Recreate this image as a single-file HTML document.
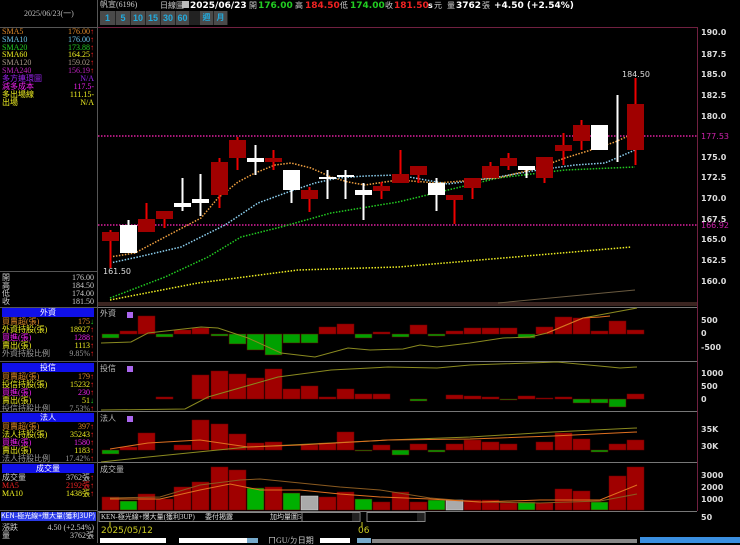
<!DOCTYPE html>
<html><head><meta charset="utf-8">
<style>
body{margin:0;width:740px;height:543px;background:#000;overflow:hidden;position:relative;font-family:"Liberation Sans","Noto Sans CJK TC",sans-serif;}
.t{position:absolute;font-size:8px;line-height:8px;white-space:nowrap;font-family:"Liberation Serif","Noto Sans CJK TC",serif;}
.r{text-align:right;}
.hd{position:absolute;left:2px;width:92px;height:9px;background:#1010e8;color:#fff;font-size:8px;line-height:9px;text-align:center;font-family:"Noto Sans CJK TC",sans-serif;}
.btn{position:absolute;top:11px;height:14px;background:#4a4a4a;color:#2ad;font-size:9px;line-height:14px;text-align:center;font-weight:bold;border-right:1px solid #222;}
.ax{position:absolute;left:701px;font-size:8px;color:#ddd;font-weight:bold;font-family:"DejaVu Sans",sans-serif;}
.tb{position:absolute;top:1px;font-size:9px;line-height:10px;font-weight:bold;white-space:nowrap;font-family:"DejaVu Sans",sans-serif;}
.tl{position:absolute;top:1px;font-size:8px;line-height:9px;color:#ccc;white-space:nowrap;font-family:"Noto Sans CJK TC",sans-serif;}
</style></head><body>
<!-- left panel -->
<div style="position:absolute;left:0;top:0;width:97px;height:543px;border-right:1px solid #555;"></div>
<div style="position:absolute;left:0;top:27px;width:97px;height:1px;background:#555"></div>
<div class="t" style="left:24px;top:10px;color:#bbb">2025/06/23(一)</div>
<div class="t" style="left:2px;top:28px;color:#e08a2a">SMA5</div><div class="t r" style="right:646px;top:28px;color:#e08a2a">176.00<span style="color:#f22">↑</span></div>
<div class="t" style="left:2px;top:36px;color:#6bc4e8">SMA10</div><div class="t r" style="right:646px;top:36px;color:#6bc4e8">176.00<span style="color:#f22">↑</span></div>
<div class="t" style="left:2px;top:44px;color:#2c2">SMA20</div><div class="t r" style="right:646px;top:44px;color:#2c2">173.88<span style="color:#f22">↑</span></div>
<div class="t" style="left:2px;top:51px;color:#ee2">SMA60</div><div class="t r" style="right:646px;top:51px;color:#ee2">164.25<span style="color:#f22">↑</span></div>
<div class="t" style="left:2px;top:59px;color:#a98">SMA120</div><div class="t r" style="right:646px;top:59px;color:#a98">159.02<span style="color:#f22">↑</span></div>
<div class="t" style="left:2px;top:67px;color:#b2b">SMA240</div><div class="t r" style="right:646px;top:67px;color:#b2b">156.19<span style="color:#f22">↑</span></div>
<div class="t" style="left:2px;top:75px;color:#92e">多方連環圖</div><div class="t r" style="right:646px;top:75px;color:#92e">N/A</div>
<div class="t" style="left:2px;top:83px;color:#e2e">減多成本</div><div class="t r" style="right:646px;top:83px;color:#e2e">117.5-</div>
<div class="t" style="left:2px;top:91px;color:#ee2">多出場線</div><div class="t r" style="right:646px;top:91px;color:#ee2">111.15-</div>
<div class="t" style="left:2px;top:99px;color:#ee2">出場</div><div class="t r" style="right:646px;top:99px;color:#ee2">N/A</div>
<div style="position:absolute;left:0;top:271px;width:97px;height:1px;background:#555"></div>
<div class="t" style="left:2px;top:274px;color:#ccc">開</div><div class="t r" style="right:646px;top:274px;color:#ccc">176.00</div>
<div class="t" style="left:2px;top:282px;color:#ccc">高</div><div class="t r" style="right:646px;top:282px;color:#ccc">184.50</div>
<div class="t" style="left:2px;top:290px;color:#ccc">低</div><div class="t r" style="right:646px;top:290px;color:#ccc">174.00</div>
<div class="t" style="left:2px;top:298px;color:#ccc">收</div><div class="t r" style="right:646px;top:298px;color:#ccc">181.50</div>
<div style="position:absolute;left:0;top:307px;width:97px;height:1px;background:#555"></div>
<div class="hd" style="top:308px">外資</div>
<div class="t" style="left:2px;top:318px;color:#e08a2a">買賣超(張)</div><div class="t r" style="right:646px;top:318px;color:#e08a2a">175<span style="color:#2c2">↓</span></div>
<div class="t" style="left:2px;top:326px;color:#ee2">外資持股(張)</div><div class="t r" style="right:646px;top:326px;color:#ee2">18927<span style="color:#f22">↑</span></div>
<div class="t" style="left:2px;top:334px;color:#e2e">買進(張)</div><div class="t r" style="right:646px;top:334px;color:#e2e">1288<span style="color:#f22">↑</span></div>
<div class="t" style="left:2px;top:342px;color:#ee2">賣出(張)</div><div class="t r" style="right:646px;top:342px;color:#ee2">1113<span style="color:#f22">↑</span></div>
<div class="t" style="left:2px;top:350px;color:#999">外資持股比例</div><div class="t r" style="right:646px;top:350px;color:#999">9.85%<span style="color:#f22">↑</span></div>
<div style="position:absolute;left:0;top:361px;width:97px;height:1px;background:#555"></div>
<div class="hd" style="top:363px">投信</div>
<div class="t" style="left:2px;top:373px;color:#e08a2a">買賣超(張)</div><div class="t r" style="right:646px;top:373px;color:#e08a2a">179<span style="color:#f22">↑</span></div>
<div class="t" style="left:2px;top:381px;color:#ee2">投信持股(張)</div><div class="t r" style="right:646px;top:381px;color:#ee2">15232<span style="color:#f22">↑</span></div>
<div class="t" style="left:2px;top:389px;color:#e2e">買進(張)</div><div class="t r" style="right:646px;top:389px;color:#e2e">230<span style="color:#f22">↑</span></div>
<div class="t" style="left:2px;top:397px;color:#ee2">賣出(張)</div><div class="t r" style="right:646px;top:397px;color:#ee2">51<span style="color:#2c2">↓</span></div>
<div class="t" style="left:2px;top:405px;color:#999">投信持股比例</div><div class="t r" style="right:646px;top:405px;color:#999">7.53%<span style="color:#f22">↑</span></div>
<div style="position:absolute;left:0;top:411px;width:97px;height:1px;background:#555"></div>
<div class="hd" style="top:413px">法人</div>
<div class="t" style="left:2px;top:423px;color:#e08a2a">買賣超(張)</div><div class="t r" style="right:646px;top:423px;color:#e08a2a">397<span style="color:#f22">↑</span></div>
<div class="t" style="left:2px;top:431px;color:#ee2">法人持股(張)</div><div class="t r" style="right:646px;top:431px;color:#ee2">35243<span style="color:#f22">↑</span></div>
<div class="t" style="left:2px;top:439px;color:#e2e">買進(張)</div><div class="t r" style="right:646px;top:439px;color:#e2e">1580<span style="color:#f22">↑</span></div>
<div class="t" style="left:2px;top:447px;color:#ee2">賣出(張)</div><div class="t r" style="right:646px;top:447px;color:#ee2">1183<span style="color:#f22">↑</span></div>
<div class="t" style="left:2px;top:455px;color:#999">法人持股比例</div><div class="t r" style="right:646px;top:455px;color:#999">17.42%<span style="color:#f22">↑</span></div>
<div style="position:absolute;left:0;top:462px;width:97px;height:1px;background:#555"></div>
<div class="hd" style="top:464px">成交量</div>
<div class="t" style="left:2px;top:474px;color:#ccc">成交量</div><div class="t r" style="right:646px;top:474px;color:#ccc">3762張<span style="color:#f22">↑</span></div>
<div class="t" style="left:2px;top:482px;color:#e22">MA5</div><div class="t r" style="right:646px;top:482px;color:#e22">2192張<span style="color:#f22">↑</span></div>
<div class="t" style="left:2px;top:490px;color:#ee2">MA10</div><div class="t r" style="right:646px;top:490px;color:#ee2">1438張<span style="color:#f22">↑</span></div>
<div style="position:absolute;left:0;top:510px;width:97px;height:1px;background:#555"></div>
<div style="position:absolute;left:1px;top:512px;width:95px;height:9px;background:#2a3ae8;color:#fff;font-size:7px;line-height:9px;font-family:'Noto Sans CJK TC',sans-serif;white-space:nowrap;overflow:hidden">KEN-極光線+爆大量(獲利3UP)</div>
<div class="t" style="left:2px;top:524px;color:#ccc">漲跌</div><div class="t r" style="right:646px;top:524px;color:#ccc">4.50 (+2.54%)</div>
<div class="t" style="left:2px;top:532px;color:#ccc">量</div><div class="t r" style="right:646px;top:532px;color:#ccc">3762張</div>

<!-- top bar -->
<div class="t" style="left:100px;top:1px;color:#ccc;font-size:8px">帆宣(6196)</div>
<div class="tl" style="left:160px">日線圖</div>
<div style="position:absolute;left:182px;top:1px;width:7px;height:7px;background:#bbb"></div>
<div class="tb" style="left:190px;color:#fff">2025/06/23</div>
<div class="tl" style="left:249px">開</div><div class="tb" style="left:258px;color:#2c2">176.00</div>
<div class="tl" style="left:295px">高</div><div class="tb" style="left:305px;color:#e22">184.50</div>
<div class="tl" style="left:340px">低</div><div class="tb" style="left:350px;color:#2c2">174.00</div>
<div class="tl" style="left:385px">收</div><div class="tb" style="left:394px;color:#e22">181.50</div>
<div class="tb" style="left:428px;color:#fff;font-size:8px">s</div><div class="tl" style="left:434px">元</div>
<div class="tl" style="left:447px">量</div><div class="tb" style="left:456px;color:#fff">3762</div>
<div class="tl" style="left:482px">張</div><div class="tb" style="left:494px;color:#fff">+4.50 (+2.54%)</div>
<div class="btn" style="left:100px;width:15px">1</div>
<div class="btn" style="left:116px;width:14px">5</div>
<div class="btn" style="left:131px;width:14px">10</div>
<div class="btn" style="left:146px;width:14px">15</div>
<div class="btn" style="left:161px;width:14px">30</div>
<div class="btn" style="left:176px;width:13px">60</div>
<div class="btn" style="left:190px;width:9px;background:#222"></div>
<div class="btn" style="left:200px;width:13px;font-size:8px">週</div>
<div class="btn" style="left:214px;width:13px;font-size:8px">月</div>

<!-- axis labels -->
<div class="ax" style="top:28px">190.0</div><div class="ax" style="top:50px">187.5</div><div class="ax" style="top:70px">185.0</div><div class="ax" style="top:91px">182.5</div><div class="ax" style="top:112px">180.0</div><div class="ax" style="top:153px">175.0</div><div class="ax" style="top:173px">172.5</div><div class="ax" style="top:194px">170.0</div><div class="ax" style="top:215px">167.5</div><div class="ax" style="top:235px">165.0</div><div class="ax" style="top:256px">162.5</div><div class="ax" style="top:277px">160.0</div>
<div class="ax" style="top:132px;color:#c2a;font-weight:normal">177.53</div><div class="ax" style="top:221px;color:#c2a;font-weight:normal">166.92</div>
<div class="ax" style="top:316px">500</div><div class="ax" style="top:329px">0</div><div class="ax" style="top:343px">-500</div>
<div class="ax" style="top:369px">1000</div><div class="ax" style="top:382px">500</div><div class="ax" style="top:395px">0</div>
<div class="ax" style="top:425px">35K</div><div class="ax" style="top:442px">30K</div>
<div class="ax" style="top:471px">3000</div><div class="ax" style="top:483px">2000</div><div class="ax" style="top:495px">1000</div>
<div class="ax" style="top:513px">50</div>
<div class="t" style="left:622px;top:71px;color:#ddd;font-family:'DejaVu Sans',sans-serif">184.50</div>
<div class="t" style="left:103px;top:268px;color:#ddd;font-family:'DejaVu Sans',sans-serif">161.50</div>
<div class="t" style="left:100px;top:310px;color:#bbb">外資</div>
<div class="t" style="left:100px;top:365px;color:#bbb">投信</div>
<div class="t" style="left:100px;top:415px;color:#bbb">法人</div>
<div class="t" style="left:100px;top:466px;color:#bbb">成交量</div>

<svg width="740" height="543" style="position:absolute;left:0;top:0">
<g fill="none">
<path d="M98 27.5H697.5V511" stroke="#702040"/>
<path d="M98 307.5H697M98 361.5H697M98 411.5H697M98 462.5H697M98 511.5H697" stroke="#777"/>
<rect x="98" y="302" width="599" height="4" fill="#3a2420"/>
<rect x="127" y="312" width="6" height="6" fill="#a6e"/><rect x="127" y="366" width="6" height="6" fill="#a6e"/><rect x="127" y="416" width="6" height="6" fill="#a6e"/>
<path d="M98 136H697M98 225H697" stroke="#e020a0" stroke-width="1.5" stroke-dasharray="1.5 1.5"/>
<polyline points="498,303 635,290" stroke="#6a5a40"/>
<polyline points="110,300 198,283 298,270 398,267 631,247" stroke="#ee2" stroke-width="1.5" stroke-dasharray="1.5 1.5"/>
<polyline points="110,298 165,277 208,257 241,237 281,227 331,213 398,202 498,178 565,170 635,167" stroke="#2c2" stroke-width="1.5" stroke-dasharray="1.5 1.5"/>
<polyline points="110,263 138,257 181,247 225,225 258,203 291,191 315,183 338,178 365,176 398,175 448,184 498,177 538,170 575,165 605,163 635,150" stroke="#8cd0f0" stroke-width="1.5" stroke-dasharray="1.5 1.5"/>
<polyline points="110,257 135,253 165,237 201,218 218,198 238,182 255,173 275,165 291,163 311,168 331,177 348,182 365,185 398,180 438,183 498,178 538,168 565,158 591,150 615,142 635,133" stroke="#f0a040" stroke-width="1.5" stroke-dasharray="1.5 1.5"/>
</g>
<g stroke-width="2">
<path stroke="#e00" d="M110.5 230V268M146.5 203V232M164.5 211V228M219.5 158V208M237.5 137V170M273.5 150V170M309.5 187V212M381.5 182V199M400.5 150V183M418.5 166V183M454.5 195V224M472.5 178V199M490.5 162V178M508.5 153V170M544.5 157V183M563.5 133V165M581.5 120V150M635.5 78V165"/>
<path stroke="#fff" d="M128.5 220V253M182.5 178V211M200.5 174V216M255.5 145V175M291.5 170V203M327.5 170V199M345.5 170V199M363.5 183V220M436.5 178V211M526.5 166V178M617.5 95V162"/>
</g>
<g fill="#a00000">
<rect x="102" y="232" width="17" height="9"/><rect x="138" y="219" width="17" height="13"/><rect x="156" y="211" width="17" height="8"/><rect x="211" y="162" width="17" height="33"/><rect x="229" y="140" width="17" height="18"/><rect x="265" y="158" width="17" height="4"/><rect x="301" y="190" width="17" height="9"/><rect x="373" y="186" width="17" height="5"/><rect x="392" y="174" width="17" height="9"/><rect x="410" y="166" width="17" height="9"/><rect x="446" y="195" width="17" height="5"/><rect x="464" y="178" width="17" height="10"/><rect x="482" y="166" width="17" height="12"/><rect x="500" y="158" width="17" height="8"/><rect x="536" y="157" width="17" height="21"/><rect x="555" y="145" width="17" height="6"/><rect x="573" y="125" width="17" height="16"/><rect x="627" y="104" width="17" height="46"/>
</g>
<g fill="#fff">
<rect x="120" y="225" width="17" height="28"/><rect x="174" y="203" width="17" height="4"/><rect x="192" y="199" width="17" height="4"/><rect x="247" y="158" width="17" height="4"/><rect x="283" y="170" width="17" height="20"/><rect x="319" y="177" width="17" height="2"/><rect x="337" y="175" width="17" height="2"/><rect x="355" y="190" width="17" height="5"/><rect x="428" y="183" width="17" height="12"/><rect x="518" y="166" width="17" height="4"/><rect x="591" y="125" width="17" height="25"/>
</g>
<g stroke="#600" stroke-width="0.5">
<g fill="#a00000">
<rect x="120" y="331" width="17" height="3"/><rect x="138" y="316" width="17" height="18"/><rect x="174" y="330" width="17" height="4"/><rect x="192" y="328" width="17" height="6"/><rect x="319" y="327" width="17" height="7"/><rect x="337" y="324" width="17" height="10"/><rect x="373" y="332" width="17" height="2"/><rect x="410" y="325" width="17" height="9"/><rect x="446" y="331" width="17" height="3"/><rect x="464" y="328" width="17" height="6"/><rect x="482" y="328" width="17" height="6"/><rect x="500" y="328" width="17" height="6"/><rect x="536" y="327" width="17" height="7"/><rect x="555" y="317" width="17" height="17"/><rect x="573" y="318" width="17" height="16"/><rect x="591" y="331" width="17" height="3"/><rect x="609" y="321" width="17" height="13"/><rect x="627" y="330" width="17" height="4"/>
</g>
<g fill="#00a000">
<rect x="102" y="334" width="17" height="4"/><rect x="156" y="334" width="17" height="3"/><rect x="211" y="334" width="17" height="2"/><rect x="229" y="334" width="17" height="10"/><rect x="247" y="334" width="17" height="16"/><rect x="265" y="334" width="17" height="21"/><rect x="283" y="334" width="17" height="9"/><rect x="301" y="334" width="17" height="9"/><rect x="355" y="334" width="17" height="4"/><rect x="392" y="334" width="17" height="3"/><rect x="428" y="334" width="17" height="2"/><rect x="518" y="334" width="17" height="4"/>
</g>
<g fill="#a00000">
<rect x="156" y="397" width="17" height="2"/><rect x="192" y="375" width="17" height="24"/><rect x="211" y="371" width="17" height="28"/><rect x="229" y="374" width="17" height="25"/><rect x="247" y="378" width="17" height="21"/><rect x="265" y="369" width="17" height="30"/><rect x="283" y="389" width="17" height="10"/><rect x="301" y="386" width="17" height="13"/><rect x="319" y="397" width="17" height="2"/><rect x="337" y="389" width="17" height="10"/><rect x="355" y="394" width="17" height="5"/><rect x="373" y="394" width="17" height="5"/><rect x="446" y="395" width="17" height="4"/><rect x="464" y="396" width="17" height="3"/><rect x="482" y="397" width="17" height="2"/><rect x="518" y="396" width="17" height="3"/><rect x="536" y="398" width="17" height="1"/><rect x="555" y="397" width="17" height="2"/><rect x="627" y="394" width="17" height="5"/>
</g>
<g fill="#00a000">
<rect x="410" y="399" width="17" height="2"/><rect x="500" y="399" width="17" height="1"/><rect x="573" y="399" width="17" height="4"/><rect x="591" y="399" width="17" height="4"/><rect x="609" y="399" width="17" height="8"/>
</g>
<g fill="#a00000">
<rect x="120" y="447" width="17" height="3"/><rect x="138" y="433" width="17" height="17"/><rect x="174" y="445" width="17" height="5"/><rect x="192" y="420" width="17" height="30"/><rect x="211" y="424" width="17" height="26"/><rect x="229" y="434" width="17" height="16"/><rect x="247" y="443" width="17" height="7"/><rect x="265" y="442" width="17" height="8"/><rect x="301" y="445" width="17" height="5"/><rect x="319" y="443" width="17" height="7"/><rect x="337" y="432" width="17" height="18"/><rect x="373" y="445" width="17" height="5"/><rect x="410" y="444" width="17" height="6"/><rect x="446" y="444" width="17" height="6"/><rect x="464" y="440" width="17" height="10"/><rect x="482" y="442" width="17" height="8"/><rect x="500" y="444" width="17" height="6"/><rect x="536" y="442" width="17" height="8"/><rect x="555" y="433" width="17" height="17"/><rect x="573" y="439" width="17" height="11"/><rect x="609" y="444" width="17" height="6"/><rect x="627" y="440" width="17" height="10"/>
</g>
<g fill="#00a000">
<rect x="102" y="450" width="17" height="4"/><rect x="355" y="450" width="17" height="1"/><rect x="392" y="450" width="17" height="5"/><rect x="428" y="450" width="17" height="2"/><rect x="591" y="450" width="17" height="2"/>
</g>
<g fill="#a00000">
<rect x="102" y="497" width="17" height="13"/><rect x="138" y="494" width="17" height="16"/><rect x="156" y="499" width="17" height="11"/><rect x="174" y="487" width="17" height="23"/><rect x="192" y="482" width="17" height="28"/><rect x="211" y="467" width="17" height="43"/><rect x="229" y="470" width="17" height="40"/><rect x="265" y="487" width="17" height="23"/><rect x="319" y="497" width="17" height="13"/><rect x="337" y="492" width="17" height="18"/><rect x="373" y="502" width="17" height="8"/><rect x="392" y="492" width="17" height="18"/><rect x="410" y="502" width="17" height="8"/><rect x="464" y="500" width="17" height="10"/><rect x="482" y="500" width="17" height="10"/><rect x="500" y="503" width="17" height="7"/><rect x="536" y="503" width="17" height="7"/><rect x="555" y="489" width="17" height="21"/><rect x="573" y="491" width="17" height="19"/><rect x="609" y="476" width="17" height="34"/><rect x="627" y="467" width="17" height="43"/>
</g>
<g fill="#00b000">
<rect x="120" y="501" width="17" height="9"/><rect x="247" y="488" width="17" height="22"/><rect x="283" y="493" width="17" height="17"/><rect x="355" y="499" width="17" height="11"/><rect x="428" y="500" width="17" height="10"/><rect x="518" y="502" width="17" height="8"/><rect x="591" y="502" width="17" height="8"/>
</g>
<rect x="301" y="496" width="17" height="14" fill="#aaa" stroke="#ddd"/><rect x="446" y="500" width="17" height="10" fill="#aaa" stroke="#ddd"/>
</g>
<g fill="none" stroke-width="1">
<polyline stroke="#8a8a20" points="101,343 131,342 148,333 201,327 218,328 248,338 281,353 315,357 348,348 370,350 403,349 420,345 437,347 470,343 503,338 530,337 547,333 583,318 610,313 637,308"/>
<polyline stroke="#e07020" points="547,333 583,318 600,317 610,316"/>
<polyline stroke="#8a8a20" points="101,410 185,409 208,397 278,377 331,370 388,367 437,368 470,365 557,362 610,367 620,368 637,367"/>
<polyline stroke="#8a8a20" points="101,462 148,457 198,452 248,447 331,443 388,440 470,437 553,432 637,428"/>
<polyline stroke="#e07020" points="110,449 148,443 200,440 248,447 300,445 388,440 470,439 553,436 637,432"/>
<polyline stroke="#8a5a20" points="110,498 160,497 200,485 240,480 260,479 300,483 340,487 380,490 430,498 480,502 540,503 600,501 637,494"/>
<polyline stroke="#e07020" points="110,499 160,499 200,490 230,484 260,490 300,490 340,494 380,497 430,499 480,502 540,500 600,500 637,485"/>
</g>
<rect x="99" y="512.5" width="203" height="9" fill="#000" stroke="#888"/>
<rect x="302" y="512.5" width="58" height="9" fill="#000" stroke="#888"/><rect x="352" y="513" width="7" height="8" fill="#222"/>
<rect x="367" y="512.5" width="58" height="9" fill="#000" stroke="#888"/><rect x="417" y="513" width="7" height="8" fill="#222"/>
<path d="M110 522v5M362 522v5" stroke="#cc2"/>
<rect x="100" y="538" width="66" height="6" fill="#fff"/><rect x="179" y="538" width="68" height="6" fill="#fff"/><rect x="247" y="538" width="11" height="6" fill="#7ac"/>
<rect x="320" y="538" width="30" height="6" fill="#fff"/><rect x="357" y="538" width="14" height="6" fill="#7ac"/><rect x="372" y="539" width="265" height="4" fill="#888"/>
<rect x="640" y="537" width="100" height="6" fill="#3b8fe0"/>
</svg>
<div class="t" style="left:101px;top:513px;color:#ddd;font-size:7px">KEN-極光線+爆大量(獲利3UP)</div>
<div class="t" style="left:205px;top:513px;color:#ddd;font-size:7px">委付揭露</div>
<div class="t" style="left:270px;top:513px;color:#ddd;font-size:7px">加均量圖5</div>
<div class="t" style="left:101px;top:527px;color:#cc2;font-size:9px;font-family:'DejaVu Sans',sans-serif">2025/05/12</div>
<div class="t" style="left:358px;top:527px;color:#cc2;font-size:9px;font-family:'DejaVu Sans',sans-serif">06</div>
<div class="t" style="left:268px;top:537px;color:#ccc">ㄇGU/ㄉ日期</div>
</body></html>
